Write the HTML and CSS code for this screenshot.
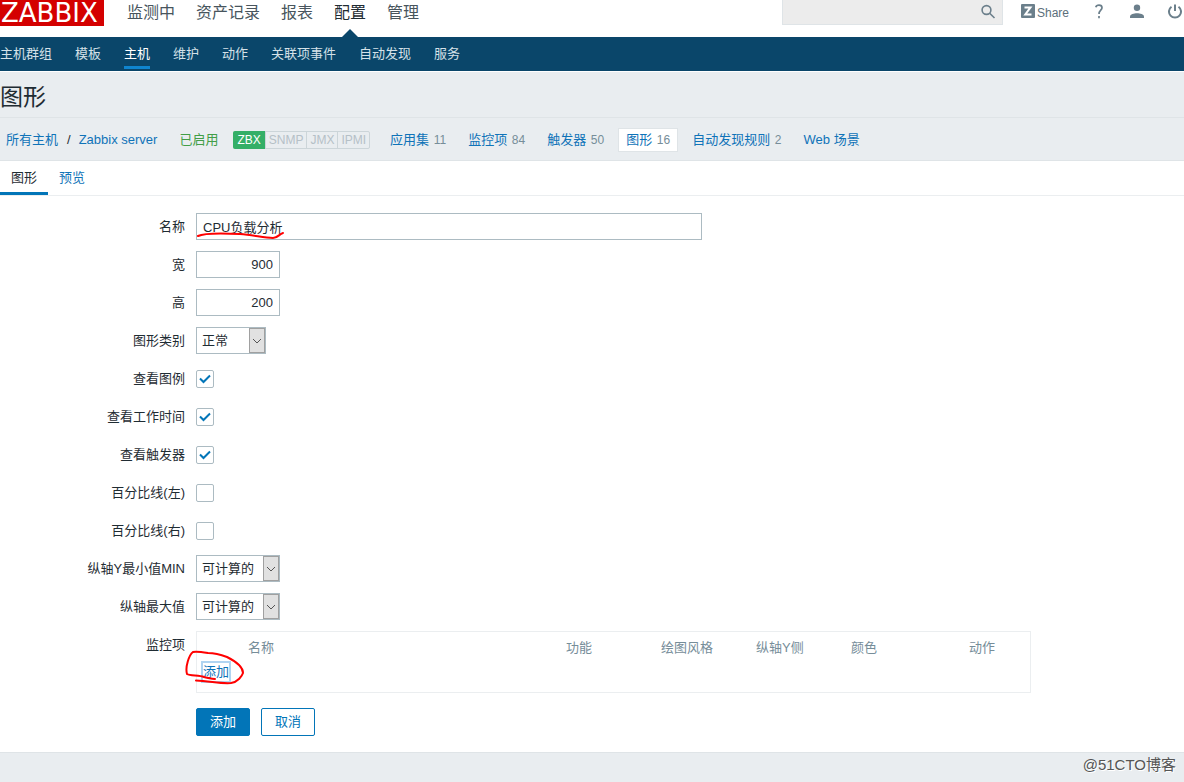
FILE: index.html
```html
<!DOCTYPE html>
<html lang="zh-CN">
<head>
<meta charset="utf-8">
<title>图形</title>
<link rel="stylesheet" href="styles.css">
</head>
<body>
<header class="top">
  <a class="logo" href="#">ZABBIX</a>
  <nav class="menu">
    <a href="#">监测中</a>
    <a href="#">资产记录</a>
    <a href="#">报表</a>
    <a href="#" class="current">配置</a>
    <a href="#">管理</a>
  </nav>
  <form class="search">
    <input type="text" aria-label="搜索">
    <button type="button" aria-label="搜索">
      <svg width="16" height="16" viewBox="0 0 16 16" fill="none" stroke="#6b7f8b" stroke-width="1.600"><circle cx="6.500" cy="6" r="4.400"/><path d="M9.700 9.200L14.500 14"/></svg>
    </button>
  </form>
  <a class="share" href="#">
    <svg width="14" height="14" viewBox="0 0 14 14"><rect width="14" height="14" rx="1" fill="#6b7f8b"/><path d="M3.500 3.400h6L4.300 10.500h6.200" fill="none" stroke="#fff" stroke-width="2"/></svg>
    <span>Share</span>
  </a>
  <a class="icon help" href="#" aria-label="帮助">
    <svg width="14" height="16" viewBox="0 0 14 16" fill="none" stroke="#6b7f8b" stroke-width="1.700"><path d="M3.800 4.200C4.200 2.700 5.500 2.200 7 2.200C8.800 2.200 10 3.200 10 4.800C10 7.200 7 7.300 7 11"/><path d="M7 13v2.200"/></svg>
  </a>
  <a class="icon" href="#" aria-label="用户">
    <svg width="14" height="16" viewBox="0 0 14 16" fill="#6b7f8b"><circle cx="7" cy="4.800" r="3.200"/><path d="M0 15v-1.300C0 11.300 4 10.300 7 10.300s7 1 7 3.400v1.300z"/></svg>
  </a>
  <a class="icon" href="#" aria-label="退出">
    <svg width="14" height="16" viewBox="0 0 14 16" fill="none" stroke="#6b7f8b" stroke-width="2"><path d="M3.500 3.700A6 6 0 1 0 10.500 3.700M7 1.500V8"/></svg>
  </a>
</header>

<nav class="subnav">
  <a href="#">主机群组</a>
  <a href="#">模板</a>
  <a href="#" class="current">主机</a>
  <a href="#">维护</a>
  <a href="#">动作</a>
  <a href="#">关联项事件</a>
  <a href="#">自动发现</a>
  <a href="#">服务</a>
</nav>

<div class="title"><h1>图形</h1></div>

<nav class="crumbs">
  <a href="#">所有主机</a>
  <span class="slash">/</span>
  <a href="#">Zabbix server</a>
  <span class="enabled">已启用</span>
  <span class="status"><span class="on">ZBX</span><span>SNMP</span><span>JMX</span><span>IPMI</span></span>
  <ul class="objects">
    <li><a href="#">应用集</a> <small>11</small></li>
    <li><a href="#">监控项</a> <small>84</small></li>
    <li><a href="#">触发器</a> <small>50</small></li>
    <li class="selected"><a href="#">图形</a> <small>16</small></li>
    <li><a href="#">自动发现规则</a> <small>2</small></li>
    <li><a href="#">Web 场景</a></li>
  </ul>
</nav>

<main>
  <nav class="tabs">
    <a href="#" class="current">图形</a>
    <a href="#">预览</a>
  </nav>
  <form class="form">
    <div class="row">
      <label for="name">名称</label>
      <div class="field">
        <input class="text wide" id="name" type="text" value="CPU负载分析">
        <svg class="mark underline" width="92" height="10" viewBox="0 0 92 10"><path d="M2 5C8 2 24 2 44 3C58 4 68 7 77 7C82 7 83 3 87 2"/></svg>
      </div>
    </div>
    <div class="row">
      <label for="width">宽</label>
      <div class="field"><input class="text number" id="width" type="text" value="900"></div>
    </div>
    <div class="row">
      <label for="height">高</label>
      <div class="field"><input class="text number" id="height" type="text" value="200"></div>
    </div>
    <div class="row">
      <label for="type">图形类别</label>
      <div class="field"><span class="select short"><select id="type"><option>正常</option></select><span class="arrow"><svg width="10" height="6" viewBox="0 0 10 6"><path d="M1 1l4 4 4-4"/></svg></span></span></div>
    </div>
    <div class="row">
      <label for="legend">查看图例</label>
      <div class="field"><span class="check"><input id="legend" type="checkbox" checked><svg width="12" height="10" viewBox="0 0 12 10"><path d="M1 4.500l3.500 3.500L11 1.500"/></svg></span></div>
    </div>
    <div class="row">
      <label for="work">查看工作时间</label>
      <div class="field"><span class="check"><input id="work" type="checkbox" checked><svg width="12" height="10" viewBox="0 0 12 10"><path d="M1 4.500l3.500 3.500L11 1.500"/></svg></span></div>
    </div>
    <div class="row">
      <label for="triggers">查看触发器</label>
      <div class="field"><span class="check"><input id="triggers" type="checkbox" checked><svg width="12" height="10" viewBox="0 0 12 10"><path d="M1 4.500l3.500 3.500L11 1.500"/></svg></span></div>
    </div>
    <div class="row">
      <label for="left">百分比线(左)</label>
      <div class="field"><span class="check"><input id="left" type="checkbox"></span></div>
    </div>
    <div class="row">
      <label for="right">百分比线(右)</label>
      <div class="field"><span class="check"><input id="right" type="checkbox"></span></div>
    </div>
    <div class="row">
      <label for="ymin">纵轴Y最小值MIN</label>
      <div class="field"><span class="select"><select id="ymin"><option>可计算的</option></select><span class="arrow"><svg width="10" height="6" viewBox="0 0 10 6"><path d="M1 1l4 4 4-4"/></svg></span></span></div>
    </div>
    <div class="row">
      <label for="ymax">纵轴最大值</label>
      <div class="field"><span class="select"><select id="ymax"><option>可计算的</option></select><span class="arrow"><svg width="10" height="6" viewBox="0 0 10 6"><path d="M1 1l4 4 4-4"/></svg></span></span></div>
    </div>
    <div class="row">
      <span class="label" id="items-label">监控项</span>
      <div class="field items">
        <table aria-labelledby="items-label">
          <colgroup><col class="c-icon"><col class="c-name"><col class="c-col"><col class="c-col"><col class="c-col"><col class="c-color"><col></colgroup>
          <thead><tr><th></th><th>名称</th><th>功能</th><th>绘图风格</th><th>纵轴Y侧</th><th>颜色</th><th>动作</th></tr></thead>
          <tbody><tr><td colspan="7"><button type="button" class="link">添加</button></td></tr></tbody>
        </table>
        <svg class="mark loop" width="62" height="36" viewBox="0 0 62 36"><path d="M11 30.500C25 31 36 34 46 33C53 32 57 26 58 23C58 17 50 11 42 7C34 4 29 3 23 3C17 2 11 1 8 2C4 5 0 17 2 24C5 26 14 25 19 27C24 28 27 29 30 29"/></svg>
      </div>
    </div>
    <div class="row actions">
      <span></span>
      <div class="buttons">
        <button type="submit" class="btn primary">添加</button>
        <button type="button" class="btn">取消</button>
      </div>
    </div>
  </form>
</main>
<footer>@51CTO博客</footer>
</body>
</html>
```
FILE: styles.css
```css
* { box-sizing: border-box; }
body {
  margin: 0;
  background: #e9edf0;
  color: #1f2c33;
  font: 13px/18px "Liberation Sans", "Noto Sans CJK SC", sans-serif;
  overflow-x: hidden;
}
a { color: #0f73b8; text-decoration: none; }
input, select, button { font: inherit; color: inherit; margin: 0; }

.top {
  display: flex;
  align-items: flex-start;
  height: 37px;
  background: #fff;
}
.logo {
  min-width: 104px;
  height: 26px;
  padding-left: 1px;
  background: #d40000;
  color: #fff;
  font: 26px/26px "DejaVu Sans", sans-serif;
}
.menu { display: flex; gap: 21px; margin-left: 23px; }
.menu a {
  position: relative;
  height: 37px;
  color: #48555d;
  font-size: 16px;
  line-height: 26px;
}
.menu .current { color: #1f2c33; }
.menu .current::after {
  content: "";
  position: absolute;
  left: 8px;
  bottom: 0;
  border: 8px solid transparent;
  border-top: 0;
  border-bottom-color: #0a466a;
}
.search {
  display: flex;
  width: 221px;
  height: 25px;
  margin-left: auto;
  background: #ececec;
  border: 1px solid #dfe4e7;
  border-top: 0;
}
.search input { flex: 1; min-width: 0; border: 0; background: none; }
.search button { display: flex; width: 22px; padding: 4px 0 0; border: 0; background: none; align-items: flex-start; }
.share {
  display: flex;
  gap: 2px;
  margin-left: 18px;
  padding-top: 4px;
  color: #5c6f7b;
  font-size: 12px;
}
.icon { margin: 3px 1px 0 23px; line-height: 0; }
.icon:last-child { margin-right: 2px; }

.subnav {
  display: flex;
  gap: 23px;
  height: 35px;
  background: #0a466a;
  border-bottom: 1px solid #fff;
}
.subnav a { height: 32px; color: #d5e1e8; line-height: 34px; }
.subnav .current { color: #fff; border-bottom: 3px solid #0f85cf; }

.title { height: 46px; border-bottom: 1px solid #dfe4e7; }
h1 { margin: 0; font-size: 23px; font-weight: 400; line-height: 50px; }

.crumbs {
  display: flex;
  align-items: center;
  height: 43px;
  padding: 1px 0 0 6px;
  border-bottom: 1px solid #dfe4e7;
}
.slash { margin: 0 8px 0 9px; }
.enabled { margin: 0 15px 0 22px; color: #429e47; }
.status { display: flex; border: 1px solid #ccd5d9; border-radius: 2px; color: #b5c0c7; font-size: 12px; line-height: 16px; }
.status span { padding: 0 3px; }
.status span + span { border-left: 1px solid #ccd5d9; }
.status .on { margin: -1px 0 -1px -1px; padding: 1px 4px; background: #34af67; color: #fff; border-radius: 2px 0 0 2px; }
.objects { display: flex; gap: 8px; margin: 0 0 0 13px; padding: 0; list-style: none; }
.objects li { padding: 2px 7px; white-space: nowrap; }
.objects small { margin-left: 1px; color: #768d99; font-size: 12px; }
.objects .selected { background: #fff; outline: 1px solid #dfe4e7; }

main { background: #fff; border-bottom: 1px solid #dfe4e7; }
.tabs { display: flex; height: 35px; border-bottom: 1px solid #ebeef0; }
.tabs a { padding: 0 11px; line-height: 34px; }
.tabs .current { color: #1f2c33; border-bottom: 3px solid #0275b8; }
.form { display: flex; flex-direction: column; gap: 11px; padding: 17px 0 16px; }
.row { display: grid; grid-template-columns: 185px minmax(0, 1fr); column-gap: 11px; min-height: 27px; }
.row label, .row .label { line-height: 27px; text-align: right; white-space: nowrap; }
.field { display: flex; align-items: center; position: relative; }
.text { height: 27px; padding: 0 6px; border: 1px solid #acbbc2; background: #fff; }
.wide { width: 506px; }
.number { width: 84px; text-align: right; }
.select { display: flex; position: relative; width: 84px; }
.short { width: 70px; }
select { appearance: none; width: 100%; height: 27px; padding: 0 5px; border: 1px solid #acbbc2; border-radius: 0; background: #fff; }
.arrow {
  position: absolute;
  top: 1px;
  right: 1px;
  bottom: 1px;
  display: flex;
  align-items: center;
  justify-content: center;
  width: 16px;
  background: #e1e1e1;
  border: 1px solid #a0a0a0;
  pointer-events: none;
}
.arrow path { fill: none; stroke: #555; }
.check { display: flex; position: relative; }
.check input { appearance: none; width: 18px; height: 18px; border: 1px solid #acbbc2; border-radius: 2px; background: #fff; }
.check svg { position: absolute; left: 3px; top: 4px; pointer-events: none; }
.check path { fill: none; stroke: #0275b8; stroke-width: 2; }
.items { max-width: 835px; padding: 5px; border: 1px solid #ebeef0; }
table { width: 100%; table-layout: fixed; border-collapse: collapse; }
th { height: 22px; padding: 0; color: #768d99; font-weight: 400; text-align: left; }
td { height: 28px; padding: 0 0 2px 1px; line-height: 0; }
.c-icon { width: 46px; }
.c-name { width: 318px; }
.c-col { width: 95px; }
.c-color { width: 118px; }
.link { padding: 0; border: 0; background: none; color: #0f73b8; line-height: 18px; outline: 2px solid #b0d4f1; }
.mark { position: absolute; fill: none; stroke: #f00; stroke-width: 2; stroke-linecap: round; pointer-events: none; }
.underline { left: 0; top: 18px; }
.loop { left: -12px; top: 18px; }
.actions { margin-top: 4px; }
.buttons { display: flex; gap: 11px; }
.btn { height: 28px; padding: 0 13px; border: 1px solid #0275b8; border-radius: 2px; background: #fff; color: #0275b8; }
.primary { background: #0275b8; color: #fff; }
footer { padding: 3px 8px 0 0; color: #555; font-size: 15px; text-align: right; text-shadow: 1px 1px 0 #fff; }
```
